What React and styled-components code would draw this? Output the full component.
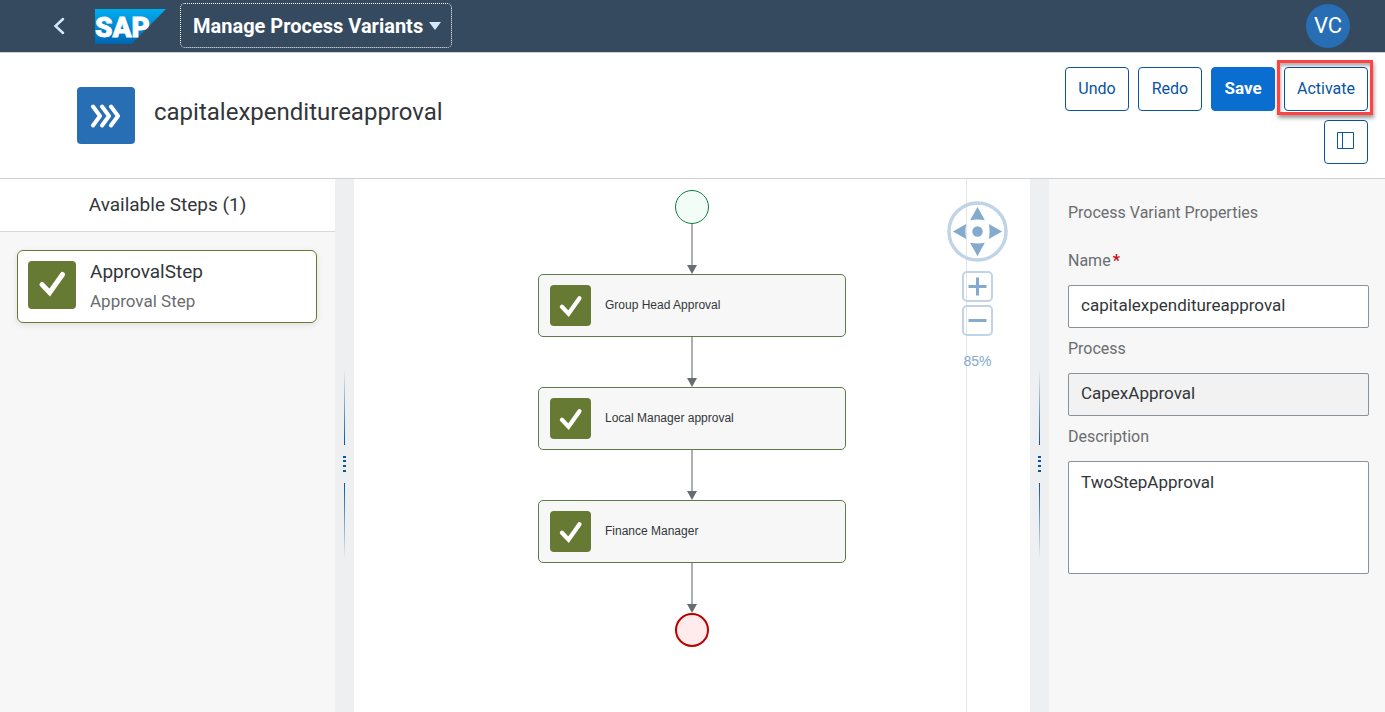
import React from "react";
import styled, { createGlobalStyle, css } from "styled-components";

const GlobalStyle = createGlobalStyle`
  *, *::before, *::after { box-sizing: border-box; }
  html, body, #root { height: 100%; }
  body {
    margin: 0;
    background: #fff;
    color: #32363a;
    font-family: Roboto, "Liberation Sans", sans-serif;
    font-size: 16px;
  }
  button, input, textarea { font: inherit; color: inherit; margin: 0; }
  h1, h2, h3, p, ol, ul { margin: 0; padding: 0; font-weight: 400; }
  svg { display: block; }
`;

const Page = styled.div`
  min-height: 100%;
  display: flex;
  flex-direction: column;
`;

const ShellBar = styled.header`
  display: flex;
  align-items: center;
  height: 53px;
  padding: 0 35px 1px 47px;
  background: #354a5f;
  border-bottom: 1px solid #d0d3d6;
`;

const BackButton = styled.button`
  display: grid;
  place-items: center;
  width: 24px;
  height: 36px;
  margin-right: 24px;
  padding: 0;
  border: 0;
  background: none;
  color: #d1e8ff;
`;

const AppMenuButton = styled.button`
  display: flex;
  align-items: center;
  gap: 6px;
  height: 45px;
  margin-left: 14px;
  padding: 0 10px 0 12px;
  border: 1px dotted #fff;
  border-radius: 5px;
  background: none;
  color: #fff;
  font-size: 20px;
  font-weight: 700;
  white-space: nowrap;
`;

const Avatar = styled.button`
  width: 44px;
  height: 44px;
  margin-left: auto;
  padding: 0;
  border: 0;
  border-radius: 50%;
  background: #286eb4;
  color: #fff;
  font-size: 22px;
`;

const ObjectHeader = styled.div`
  display: flex;
  min-height: 126px;
  padding: 14px 17px 14px 77px;
  border-bottom: 1px solid #d0d0d0;
`;

const ObjectTile = styled.div`
  display: grid;
  place-items: center;
  width: 58px;
  height: 57px;
  margin-top: 20px;
  border-radius: 4px;
  background: #286eb4;
`;

const Title = styled.h1`
  margin: 29px 0 0 19px;
  font-size: 24px;
  line-height: 32px;
`;

const Actions = styled.div`
  display: flex;
  flex-wrap: wrap;
  justify-content: flex-end;
  align-content: flex-start;
  gap: 9px;
  width: 320px;
  margin-left: auto;
`;

const ActionButton = styled.button`
  display: grid;
  place-items: center;
  min-width: ${(p) => (p.$icon ? 44 : 64)}px;
  height: 44px;
  padding: 0 12px 2px;
  border: 1px solid #0854a0;
  border-radius: 4px;
  background: #fff;
  color: #0854a0;
  ${(p) =>
    p.$primary &&
    css`
      border-color: #0a6ed1;
      background: #0a6ed1;
      color: #fff;
      font-size: 17px;
      font-weight: 700;
    `}
`;

const Highlight = styled.span`
  position: relative;
  &::after {
    content: "";
    position: absolute;
    inset: -7px -5px -4px -7px;
    border: 3px solid #ff4343;
    box-shadow: 1px 3px 4px rgba(0, 0, 0, 0.4), inset 1px 3px 3px rgba(0, 0, 0, 0.3);
    pointer-events: none;
  }
`;

const Workspace = styled.main`
  flex: 1;
  display: flex;
`;

const StepsPanel = styled.aside`
  width: 335px;
  flex: none;
  background: #f7f7f7;
`;

const PanelHeading = styled.h2`
  height: 53px;
  border-bottom: 1px solid #d9d9d9;
  background: #fff;
  font-size: 19px;
  line-height: 52px;
  text-align: center;
`;

const StepCard = styled.div`
  display: flex;
  gap: 14px;
  height: 73px;
  margin: 18px 18px 0 17px;
  padding: 10px;
  border: 1px solid #677a33;
  border-radius: 6px;
  background: #fff;
  box-shadow: 0 2px 6px rgba(0, 0, 0, 0.1);
`;

const StepName = styled.h3`
  font-size: 19px;
  line-height: 22px;
`;

const StepType = styled.p`
  margin-top: 8px;
  color: #6a6d70;
  font-size: 17px;
  line-height: 20px;
`;

const CheckTile = styled.span`
  flex: none;
  width: ${(p) => p.$size}px;
  height: ${(p) => p.$size}px;
  border-radius: 4px;
  background: #677a33;
`;

const SplitterBar = styled.div`
  display: flex;
  flex-direction: column;
  align-items: center;
  gap: 11px;
  width: 19px;
  flex: none;
  padding-top: 190px;
  background: #edeff0;
`;

const SplitterLine = styled.span`
  width: 1px;
  height: 76px;
  background: linear-gradient(to ${(p) => p.$fade}, #0854a0, rgba(8, 84, 160, 0));
`;

const Canvas = styled.section`
  position: relative;
  flex: 1;
  min-width: 400px;
  padding: 11px 0 40px;
  background: linear-gradient(#e4e4e4, #e4e4e4) right 63px top / 1px 100% no-repeat #fff;
`;

const Flow = styled.ol`
  display: flex;
  flex-direction: column;
  align-items: center;
  list-style: none;
`;

const FlowItem = styled.li`
  display: flex;
  flex-direction: column;
  align-items: center;
`;

const Terminal = styled.div`
  width: 34px;
  height: 34px;
  border-radius: 50%;
  border: ${(p) => (p.$end ? "2px solid #bb0000" : "1px solid #107e3e")};
  background: ${(p) => (p.$end ? "#ffebeb" : "#f1fdf6")};
`;

const FlowNode = styled.div`
  display: flex;
  align-items: center;
  gap: 14px;
  width: 308px;
  height: 63px;
  padding: 0 11px 1px;
  border: 1px solid #5c7a4a;
  border-radius: 5px;
  background: #f7f7f7;
  font-family: "Liberation Sans", sans-serif;
  font-size: 12px;
`;

const Navigator = styled.div`
  position: absolute;
  top: 22px;
  right: 22px;
  display: flex;
  flex-direction: column;
  align-items: center;
  gap: 3px;
  color: #84aace;
`;

const NavButton = styled.button`
  padding: 0;
  border: 0;
  background: none;
`;

const PanButton = styled(NavButton)`
  margin-bottom: 6px;
`;

const ZoomLevel = styled.span`
  margin-top: 13px;
  font-family: "Liberation Sans", sans-serif;
  font-size: 14px;
  line-height: 18px;
`;

const Properties = styled.form`
  display: flex;
  flex-direction: column;
  width: 336px;
  flex: none;
  padding: 24px 16px 24px 19px;
  background: #f7f7f7;
`;

const PropertiesHeading = styled.h2`
  margin-bottom: 28px;
  color: #6a6d70;
  font-size: 16px;
  line-height: 20px;
`;

const Label = styled.label`
  margin-bottom: 14px;
  color: #6a6d70;
  line-height: 20px;
`;

const Required = styled.span`
  margin-left: 2px;
  color: #d20a0a;
  font-weight: 700;
`;

const fieldStyle = css`
  width: 100%;
  padding: 0 12px;
  border: 1px solid #89919a;
  border-radius: 2px;
  outline: 0;
  background: #fff;
  font-size: 17px;
`;

const TextField = styled.input`
  ${fieldStyle}
  height: 43px;
  margin-bottom: 11px;
  padding-bottom: 4px;
  &:read-only { background: #f2f2f2; }
`;

const TextArea = styled.textarea`
  ${fieldStyle}
  height: 113px;
  padding-top: 10px;
  line-height: 20px;
  resize: none;
`;

const Logo = () => (
  <svg width="71" height="36" viewBox="0 -1 71 36" role="img" aria-label="SAP">
    <defs>
      <linearGradient id="logo-fill" x1="0" y1="0" x2="0" y2="1">
        <stop offset="0" stopColor="#00aeef" />
        <stop offset="0.5" stopColor="#0089d3" />
        <stop offset="1" stopColor="#0066b3" />
      </linearGradient>
    </defs>
    <path d="M0 0H71L36.500 35H0Z" fill="url(#logo-fill)" />
    <text x="0" y="28" fill="#fff" stroke="#fff" strokeWidth="0.8" fontFamily="Roboto, sans-serif" fontWeight="900" fontSize="28">
      SAP
    </text>
  </svg>
);

const Check = ({ size, viewBox = "0 0 48 48" }) => (
  <CheckTile $size={size}>
    <svg width={size} height={size} viewBox={viewBox} fill="none" stroke="#fff" strokeWidth="5" aria-hidden="true">
      <path d="M14 23.500L21.700 31.500L34.500 13.500" strokeLinejoin="miter" strokeLinecap="round" />
    </svg>
  </CheckTile>
);

const Arrow = ({ length }) => (
  <svg width="12" height={length} aria-hidden="true">
    <path d={`M6 0V${length - 9}`} stroke="#adb0b2" strokeWidth="2" />
    <path d={`M1 ${length - 9}H11L6 ${length}Z`} fill="#6a6d70" />
  </svg>
);

const Splitter = () => (
  <SplitterBar role="separator" aria-orientation="vertical">
    <SplitterLine $fade="top" />
    <svg width="3" height="16" fill="#0854a0" aria-hidden="true">
      <path d="M0 0h3v2H0zM0 4h3v2H0zM0 9h3v2H0zM0 14h3v2H0z" />
    </svg>
    <SplitterLine $fade="bottom" />
  </SplitterBar>
);

const ZoomButton = ({ label, glyph }) => (
  <NavButton type="button" aria-label={label}>
    <svg width="31" height="31" fill="none" aria-hidden="true">
      <rect x="1" y="1" width="29" height="29" rx="4" stroke="#c1d4e7" strokeWidth="2" />
      <path d={glyph} stroke="#84aace" strokeWidth="3" />
    </svg>
  </NavButton>
);

const steps = ["Group Head Approval", "Local Manager approval", "Finance Manager"];

export default function App() {
  return (
    <Page>
      <GlobalStyle />
      <ShellBar>
        <BackButton type="button" aria-label="Back">
          <svg width="12" height="18" fill="none" stroke="currentColor" strokeWidth="2.500" strokeLinecap="round" aria-hidden="true">
            <path d="M10 2L2.500 9L10 16" />
          </svg>
        </BackButton>
        <Logo />
        <AppMenuButton type="button">
          Manage Process Variants
          <svg width="12" height="8" fill="#d1e8ff" aria-hidden="true">
            <path d="M0 0H12L6 8Z" />
          </svg>
        </AppMenuButton>
        <Avatar type="button">VC</Avatar>
      </ShellBar>

      <ObjectHeader>
        <ObjectTile>
          <svg width="32" height="24" fill="none" stroke="#fff" strokeWidth="4" strokeLinecap="round" strokeLinejoin="round" aria-hidden="true">
            <path d="M3 2.500L10 12L3 21.500M12 2.500L19 12L12 21.500M21 2.500L28 12L21 21.500" />
          </svg>
        </ObjectTile>
        <Title>capitalexpenditureapproval</Title>
        <Actions>
          <ActionButton type="button">Undo</ActionButton>
          <ActionButton type="button">Redo</ActionButton>
          <ActionButton type="button" $primary>Save</ActionButton>
          <Highlight>
            <ActionButton type="button">Activate</ActionButton>
          </Highlight>
          <ActionButton type="button" aria-label="Toggle side panel" $icon>
            <svg width="18" height="18" fill="none" stroke="currentColor" aria-hidden="true">
              <path d="M0.500 0.500H16.500V16.500H0.500ZM5.500 0.500V16.500" />
            </svg>
          </ActionButton>
        </Actions>
      </ObjectHeader>

      <Workspace>
        <StepsPanel>
          <PanelHeading>Available Steps (1)</PanelHeading>
          <StepCard>
            <Check size={48} />
            <div>
              <StepName>ApprovalStep</StepName>
              <StepType>Approval Step</StepType>
            </div>
          </StepCard>
        </StepsPanel>
        <Splitter />
        <Canvas>
          <Flow>
            <FlowItem>
              <Terminal />
              <Arrow length={50} />
            </FlowItem>
            {steps.map((name) => (
              <FlowItem key={name}>
                <FlowNode>
                  <Check size={41} viewBox="0 -2 48 48" />
                  {name}
                </FlowNode>
                <Arrow length={50} />
              </FlowItem>
            ))}
            <FlowItem>
              <Terminal $end />
            </FlowItem>
          </Flow>
          <Navigator>
            <PanButton type="button" aria-label="Pan">
              <svg width="61" height="61" viewBox="0 0 62 62" fill="#84aace" aria-hidden="true">
                <circle cx="31" cy="31" r="29" fill="none" stroke="#c1d4e7" strokeWidth="3.500" />
                <circle cx="31" cy="31" r="5.300" />
                <path d="M31 6L38.500 19.500Q31 18 23.500 19.500ZM31 56L38.500 42.500Q31 44 23.500 42.500ZM6 31L19.500 23.500Q18 31 19.500 38.500ZM56 31L42.500 23.500Q44 31 42.500 38.500Z" />
              </svg>
            </PanButton>
            <ZoomButton label="Zoom in" glyph="M6.500 15.500H24.500M15.500 6.500V24.500" />
            <ZoomButton label="Zoom out" glyph="M6.500 15.500H24.500" />
            <ZoomLevel>85%</ZoomLevel>
          </Navigator>
        </Canvas>
        <Splitter />
        <Properties>
          <PropertiesHeading>Process Variant Properties</PropertiesHeading>
          <Label htmlFor="name">
            Name<Required>*</Required>
          </Label>
          <TextField id="name" defaultValue="capitalexpenditureapproval" />
          <Label htmlFor="process">Process</Label>
          <TextField id="process" value="CapexApproval" readOnly />
          <Label htmlFor="description">Description</Label>
          <TextArea id="description" defaultValue="TwoStepApproval" />
        </Properties>
      </Workspace>
    </Page>
  );
}
